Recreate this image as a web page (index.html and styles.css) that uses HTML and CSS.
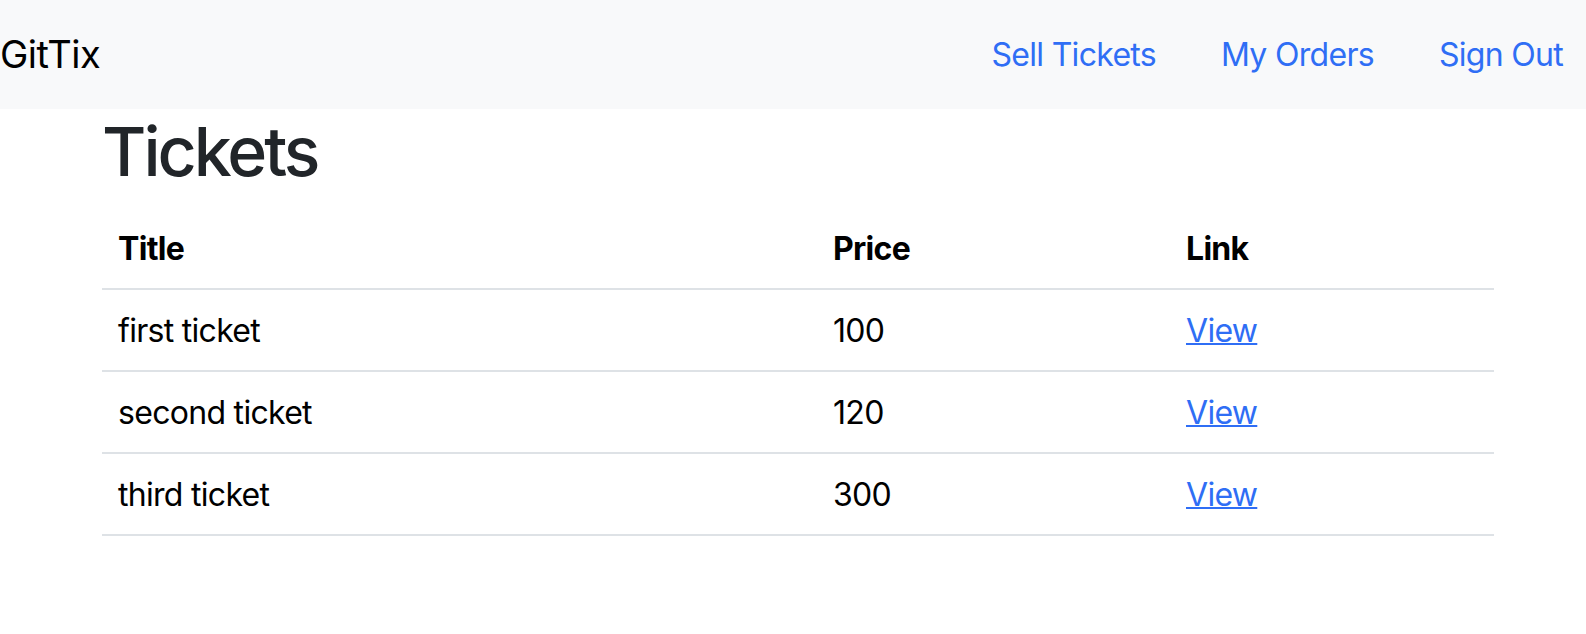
FILE: index.html
```html
<!DOCTYPE html>
<html lang="en">
<head>
<meta charset="utf-8">
<title>GitTix</title>
<link rel="stylesheet" href="styles.css">
</head>
<body>
<nav class="navbar">
  <a class="brand" href="#">GitTix</a>
  <ul class="nav-links">
    <li><a class="nav-link" href="#">Sell Tickets</a></li>
    <li><a class="nav-link" href="#">My Orders</a></li>
    <li><a class="nav-link" href="#">Sign Out</a></li>
  </ul>
</nav>
<main class="container">
  <h1 class="page-title">Tickets</h1>
  <table class="table">
    <colgroup>
      <col class="col-title">
      <col class="col-price">
      <col class="col-link">
    </colgroup>
    <thead>
      <tr><th>Title</th><th>Price</th><th>Link</th></tr>
    </thead>
    <tbody>
      <tr><td>first ticket</td><td>100</td><td><a class="link" href="#">View</a></td></tr>
      <tr><td>second ticket</td><td>120</td><td><a class="link" href="#">View</a></td></tr>
      <tr><td>third ticket</td><td>300</td><td><a class="link" href="#">View</a></td></tr>
    </tbody>
  </table>
</main>
</body>
</html>
```
FILE: styles.css
```css
* { box-sizing: border-box; }
html, body { margin: 0; padding: 0; }
body {
  font-family: Inter, "Noto Sans", "Liberation Sans", sans-serif;
  font-size: 32px;
  line-height: 1.5;
  letter-spacing: -0.7px;
  color: #212529;
  background: #fff;
}
.navbar {
  display: flex;
  align-items: center;
  justify-content: space-between;
  height: 109px;
  background: #f8f9fa;
  padding: 0 23px 0 0;
}
.brand {
  font-size: 38px;
  letter-spacing: -0.5px;
  color: #000;
  text-decoration: none;
  line-height: 1.5;
}
.nav-links {
  display: flex;
  gap: 65px;
  list-style: none;
  margin: 0;
  padding: 0;
}
.nav-link {
  color: #2f6ef5;
  text-decoration: none;
  line-height: 48px;
}
.container {
  width: 1392px;
  margin-left: 102px;
}
.page-title {
  margin: 0 0 15px;
  padding-top: 2px;
  font-size: 68px;
  font-weight: 500;
  line-height: 1.2;
  letter-spacing: -3px;
  color: #212529;
}
.table {
  width: 100%;
  table-layout: fixed;
  border-collapse: collapse;
  color: #000;
}
.col-title { width: 715px; }
.col-price { width: 353px; }
.table th, .table td {
  text-align: left;
  padding: 17px 16px 15px;
  border-bottom: 2px solid #dee2e6;
  line-height: 48px;
}
.table th { font-weight: 700; }
.table td { font-weight: 400; }
.link {
  color: #2f6ef5;
  text-decoration: underline;
  text-decoration-thickness: 2px;
}
```
